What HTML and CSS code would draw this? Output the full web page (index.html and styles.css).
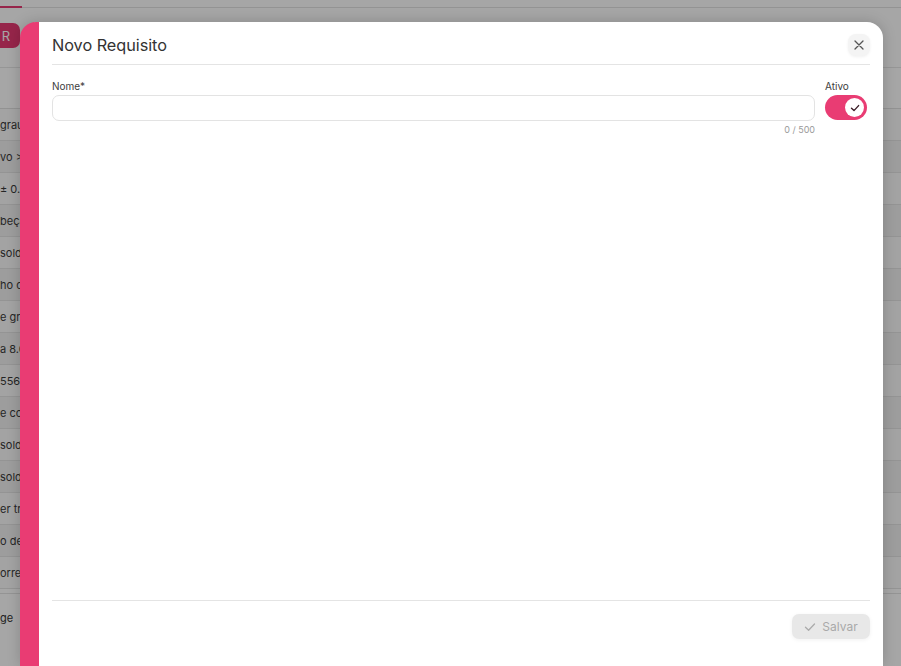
FILE: index.html
```html
<!DOCTYPE html>
<html lang="pt">
<head>
<meta charset="utf-8">
<title>Novo Requisito</title>
<link rel="stylesheet" href="styles.css">
</head>
<body>
<div class="page">
  <div class="tabs"><span class="tab-active"></span></div>
  <div class="toolbar"><button class="btn-r">R</button></div>
  <div class="table">
    <div class="thead"></div>
    <div class="row"><span>grau</span></div>
    <div class="row alt"><span>vo &gt;</span></div>
    <div class="row"><span>± 0.5</span></div>
    <div class="row alt"><span>beça</span></div>
    <div class="row"><span>solda</span></div>
    <div class="row alt"><span>ho co</span></div>
    <div class="row"><span>e grau</span></div>
    <div class="row alt"><span>a 8.0</span></div>
    <div class="row"><span>556</span></div>
    <div class="row alt"><span>e con</span></div>
    <div class="row"><span>solda</span></div>
    <div class="row alt"><span>solda</span></div>
    <div class="row"><span>er tri</span></div>
    <div class="row alt"><span>o de</span></div>
    <div class="row"><span>orret</span></div>
  </div>
  <div class="pager"><span>ge</span><span class="pager-input"></span></div>
</div>
<div class="overlay"></div>
<div class="modal">
  <div class="modal-header">
    <h1 class="modal-title">Novo Requisito</h1>
    <button class="close-btn" aria-label="Fechar">
      <svg width="10" height="10" viewBox="0 0 10 10"><path d="M1 1L9 9M9 1L1 9" stroke="#555" stroke-width="1.3" stroke-linecap="round"/></svg>
    </button>
  </div>
  <div class="modal-body">
    <div class="field field-name">
      <label class="label">Nome*</label>
      <div class="input"></div>
      <div class="counter">0 / 500</div>
    </div>
    <div class="field field-active">
      <label class="label">Ativo</label>
      <div class="toggle">
        <span class="knob">
          <svg width="10" height="10" viewBox="0 0 10 10"><path d="M1.5 5.3L4 7.6L8.6 2.6" fill="none" stroke="#3a1d27" stroke-width="1.4" stroke-linecap="round" stroke-linejoin="round"/></svg>
        </span>
      </div>
    </div>
  </div>
  <div class="modal-footer">
    <button class="save-btn">
      <svg width="12" height="12" viewBox="0 0 12 12"><path d="M1.5 6.3L4.6 9.2L10.5 3" fill="none" stroke="#ababab" stroke-width="1.3" stroke-linecap="round" stroke-linejoin="round"/></svg>
      <span>Salvar</span>
    </button>
  </div>
</div>
</body>
</html>
```

FILE: styles.css
```css
* { box-sizing: border-box; }
html, body { margin: 0; padding: 0; }
body {
  width: 901px;
  height: 666px;
  overflow: hidden;
  position: relative;
  font-family: Inter, "Noto Sans", sans-serif;
  background: #ffffff;
}
.page { width: 901px; }
.tabs {
  height: 8px;
  border-bottom: 1px solid #e2e2e2;
  position: relative;
}
.tab-active {
  position: absolute;
  left: 0;
  bottom: -1px;
  width: 22px;
  height: 2px;
  background: #e63a72;
}
.toolbar {
  height: 60px;
  padding-top: 15px;
  border-bottom: 1px solid #e6e6e6;
}
.btn-r {
  display: block;
  margin-left: -30px;
  width: 50px;
  height: 25px;
  border: none;
  border-radius: 7px;
  background: #e63a72;
  color: #fff;
  font-family: inherit;
  font-size: 13px;
  text-align: right;
  padding: 0 10px 0 0;
}
.thead {
  height: 41px;
  border-bottom: 1px solid #e0e0e0;
}
.row {
  height: 32px;
  border-bottom: 1px solid #e3e3e3;
  display: flex;
  align-items: center;
  font-size: 11px;
  color: #3a3a3a;
  padding-left: 0;
  background: #fafafa;
}
.row.alt { background: #f1f1f1; }
.pager {
  height: 60px;
  padding-top: 10px;
  display: flex;
  align-items: flex-start;
  gap: 4px;
  font-size: 11px;
  color: #333;
  border-top: 1px solid #e3e3e3;
  margin-top: 4px;
}
.pager span:first-child { line-height: 28px; }
.pager-input {
  width: 40px;
  height: 28px;
  border: 1px solid #ddd;
  border-radius: 8px;
  margin-left: 4px;
}
.overlay {
  position: absolute;
  inset: 0;
  background: rgba(0, 0, 0, 0.35);
}
.modal {
  position: absolute;
  left: 20px;
  top: 22px;
  width: 863px;
  height: 644px;
  background: #fff;
  border-left: 19px solid #e93c73;
  border-radius: 16px 16px 0 0;
  box-shadow: 0 0 14px rgba(0, 0, 0, 0.18);
  padding: 0 13px;
  display: flex;
  flex-direction: column;
}
.modal-header {
  height: 43px;
  padding-top: 4px;
  display: flex;
  align-items: center;
  justify-content: space-between;
  border-bottom: 1px solid #e4e4e4;
}
.modal-title {
  margin: 0;
  font-size: 16.3px;
  font-weight: 400;
  color: #333;
  letter-spacing: -0.05px;
}
.close-btn {
  width: 22px;
  height: 22px;
  border: none;
  border-radius: 8px;
  background: #f4f4f4;
  box-shadow: 0 1px 3px rgba(0,0,0,0.06);
  display: flex;
  align-items: center;
  justify-content: center;
  padding: 0;
  margin-right: 0;
}
.modal-body {
  flex: 1;
  display: flex;
  gap: 10px;
  padding-top: 15px;
  align-items: flex-start;
}
.field { display: flex; flex-direction: column; }
.field-name { flex: 1; }
.field-active { width: 45px; }
.label {
  font-size: 10px;
  line-height: 12px;
  color: #404040;
  margin-bottom: 3px;
}
.input {
  height: 26px;
  border: 1px solid #e3e3e3;
  border-radius: 7px;
  background: #fff;
}
.counter {
  align-self: flex-end;
  font-size: 9px;
  line-height: 12px;
  margin-top: 3px;
  color: #9a9a9a;
}
.toggle {
  width: 42px;
  height: 25px;
  border-radius: 13px;
  background: #e93c73;
  display: flex;
  align-items: center;
  justify-content: flex-end;
  padding-right: 3px;
}
.knob {
  width: 19px;
  height: 19px;
  border-radius: 50%;
  background: #fff;
  display: flex;
  align-items: center;
  justify-content: center;
}
.modal-footer {
  border-top: 1px solid #e4e4e4;
  height: 66px;
  padding-top: 13px;
  display: flex;
  justify-content: flex-end;
  align-items: flex-start;
}
.save-btn {
  width: 78px;
  height: 25px;
  border: none;
  border-radius: 7px;
  background: #e8e8e8;
  box-shadow: 0 1px 4px rgba(0,0,0,0.06);
  color: #a9a9a9;
  font-family: inherit;
  font-size: 12px;
  display: flex;
  align-items: center;
  justify-content: center;
  gap: 6px;
  padding: 0;
}
```
